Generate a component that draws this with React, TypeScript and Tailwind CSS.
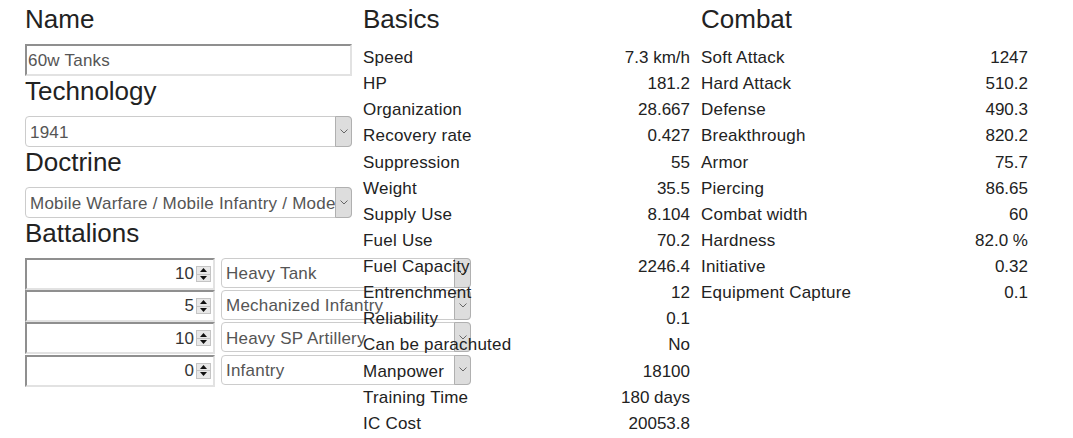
import React from "react";

const basics: [string, string][] = [
  ["Speed", "7.3 km/h"],
  ["HP", "181.2"],
  ["Organization", "28.667"],
  ["Recovery rate", "0.427"],
  ["Suppression", "55"],
  ["Weight", "35.5"],
  ["Supply Use", "8.104"],
  ["Fuel Use", "70.2"],
  ["Fuel Capacity", "2246.4"],
  ["Entrenchment", "12"],
  ["Reliability", "0.1"],
  ["Can be parachuted", "No"],
  ["Manpower", "18100"],
  ["Training Time", "180 days"],
  ["IC Cost", "20053.8"],
];

const combat: [string, string][] = [
  ["Soft Attack", "1247"],
  ["Hard Attack", "510.2"],
  ["Defense", "490.3"],
  ["Breakthrough", "820.2"],
  ["Armor", "75.7"],
  ["Piercing", "86.65"],
  ["Combat width", "60"],
  ["Hardness", "82.0 %"],
  ["Initiative", "0.32"],
  ["Equipment Capture", "0.1"],
];

const battalions: [string, string][] = [
  ["10", "Heavy Tank"],
  ["5", "Mechanized Infantry"],
  ["10", "Heavy SP Artillery"],
  ["0", "Infantry"],
];

function Heading({ children }: { children: React.ReactNode }) {
  return <h2 className="h-[29px] text-[26px] leading-[31px] mb-[11px] whitespace-nowrap">{children}</h2>;
}

function Chevron() {
  return (
    <svg width="8" height="5" viewBox="0 0 8 5" className="block">
      <path d="M0.5 0.5 L4 4 L7.5 0.5" fill="none" stroke="#666" strokeWidth="1" />
    </svg>
  );
}

function Select({ value, className }: { value: string; className: string }) {
  return (
    <div className={`flex border border-[#cccccc] rounded-[4px] bg-white text-[17px] tracking-[0.22px] text-[#555] ${className}`}>
      <div className="flex-1 min-w-0 overflow-hidden whitespace-nowrap pl-[4px] pt-[2px] flex items-center">{value}</div>
      <div className="w-[17px] shrink-0 -my-px -mr-px bg-[#dddddd] border border-[#b0b0b0] rounded-r-[4px] flex items-center justify-center">
        <Chevron />
      </div>
    </div>
  );
}

function Spinner() {
  return (
    <div className="w-[15px] h-[16px] flex flex-col border border-[#c4c4c4] bg-[#e8e8e8] ml-[2px] mr-[2px]">
      <div className="flex-1 flex items-center justify-center border-b border-[#c4c4c4]">
        <svg width="7" height="4" viewBox="0 0 7 4" className="block">
          <path d="M3.5 0 L7 4 L0 4 Z" fill="#111" />
        </svg>
      </div>
      <div className="flex-1 flex items-center justify-center">
        <svg width="7" height="4" viewBox="0 0 7 4" className="block">
          <path d="M0 0 L7 0 L3.5 4 Z" fill="#111" />
        </svg>
      </div>
    </div>
  );
}

function StatList({ title, rows }: { title: string; rows: [string, string][] }) {
  return (
    <div className="w-[327px] shrink-0">
      <Heading>{title}</Heading>
      {rows.map(([label, value]) => (
        <div key={label} className="flex justify-between h-[26.14px] leading-[28px] text-[17px] tracking-[0.22px] whitespace-nowrap">
          <span>{label}</span>
          <span className="tracking-normal">{value}</span>
        </div>
      ))}
    </div>
  );
}

export default function App() {
  return (
    <div className="w-[1073px] h-[438px] overflow-hidden bg-white flex gap-[11px] pt-[4px] pl-[25px] font-['Liberation_Sans',Arial,sans-serif] text-[#222]">
      <div className="w-[327px] shrink-0">
        <Heading>Name</Heading>
        <div className="h-[32px] border-2 border-t-[#8f8f8f] border-l-[#8f8f8f] border-r-[#e2e2e2] border-b-[#e2e2e2] bg-white flex items-center pl-[1px] pt-[2px] text-[17px] tracking-[0.22px] text-[#555]">
          60w Tanks
        </div>
        <Heading>Technology</Heading>
        <Select value="1941" className="h-[31px]" />
        <Heading>Doctrine</Heading>
        <Select value="Mobile Warfare / Mobile Infantry / Modern Blitzkrieg" className="h-[31px]" />
        <Heading>Battalions</Heading>
        {battalions.map(([count, unit], i) => (
          <div key={i} className="flex h-[32.2px]">
            <div className="w-[190px] h-[32px] shrink-0 border-2 border-t-[#8f8f8f] border-l-[#8f8f8f] border-r-[#e2e2e2] border-b-[#e2e2e2] bg-white flex items-center justify-end text-[17px] text-[#333]">
              <span>{count}</span>
              <Spinner />
            </div>
            <Select value={unit} className="ml-[6px] w-[250px] h-[30px] shrink-0" />
          </div>
        ))}
      </div>
      <StatList title="Basics" rows={basics} />
      <StatList title="Combat" rows={combat} />
    </div>
  );
}
